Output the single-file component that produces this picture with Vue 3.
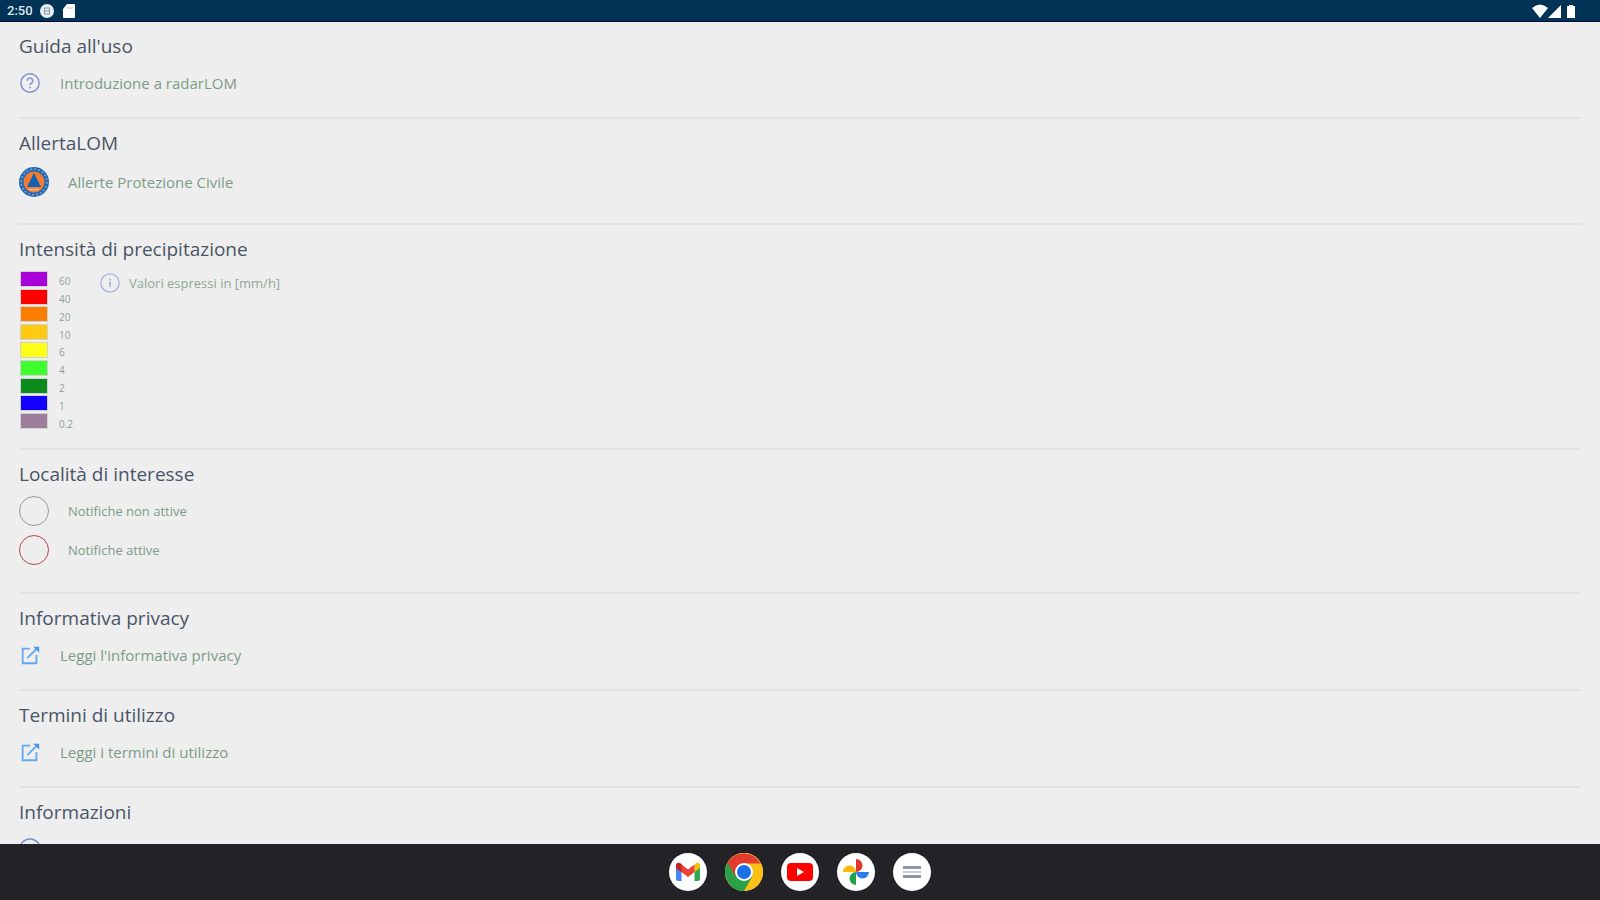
<script setup>
import { ref } from 'vue'

// legenda intensità di precipitazione (mm/h)
const legend = ref([
  { value: '60', cls: 'purple' },
  { value: '40', cls: 'red' },
  { value: '20', cls: 'orange' },
  { value: '10', cls: 'amber' },
  { value: '6', cls: 'yellow' },
  { value: '4', cls: 'lime' },
  { value: '2', cls: 'green' },
  { value: '1', cls: 'blue' },
  { value: '0.2', cls: 'mauve' },
])
// link esterni
const links = ref([
  { title: 'Informativa privacy', text: "Leggi l'informativa privacy" },
  { title: 'Termini di utilizzo', text: 'Leggi i termini di utilizzo' },
])
</script>

<template>
  <div class="screen">
    <header class="status">
      <span class="time">2:50</span>
      <svg class="s-icon" viewBox="0 0 14 14">
        <circle cx="7" cy="7" r="7" fill="#e8edf2" />
        <path d="M4.5 4h5M4.5 7h5M4.5 10h5M4.5 4v6M9.5 4v6" stroke="#8196a8" stroke-width="1" fill="none" />
      </svg>
      <svg class="s-icon sd" viewBox="0 0 14 14">
        <path d="M5 0h7a1 1 0 0 1 1 1v12a1 1 0 0 1-1 1H2a1 1 0 0 1-1-1V5z" fill="#fff" />
        <path d="M6 3v2M8 3v2M10 3v2" stroke="#b6c3cf" stroke-width="1" />
      </svg>
      <span class="space"></span>
      <svg class="sys" viewBox="0 0 46 14">
        <path d="M0 4Q8 -3 16 4L8 14z" fill="#fff" />
        <path d="M29 1v13H16z" fill="#fff" />
        <path d="M37 1h4v1h2v12h-8V2h2z" fill="#fff" />
      </svg>
    </header>

    <main class="content">
      <section>
        <h2>Guida all'uso</h2>
        <a class="row" href="#">
          <svg class="icon" viewBox="0 0 24 24" fill="none" stroke="#7f8fd6" stroke-width="1.6">
            <circle cx="12" cy="12" r="10" />
            <path d="M9 9.5a3 3 0 1 1 4.5 2.6c-1 .6-1.5 1.1-1.5 2.2M12 16v1.8" />
          </svg>
          <span>Introduzione a radarLOM</span>
        </a>
      </section>

      <section class="alert">
        <h2>AllertaLOM</h2>
        <a class="row big" href="#">
          <svg class="logo" viewBox="0 0 30 30">
            <circle cx="15" cy="15" r="15" fill="#2467b3" />
            <circle cx="15" cy="15" r="12.8" fill="none" stroke="#7fa6d2" stroke-width="1.5" stroke-dasharray="2 2" />
            <circle cx="15" cy="15" r="10.5" fill="#f47b32" />
            <path d="M15 6l7 14H8z" fill="#1263b5" />
            <path d="M10 22.5h10" stroke="#f5c09a" stroke-width="1.5" />
          </svg>
          <span>Allerte Protezione Civile</span>
        </a>
      </section>

      <section class="intensity">
        <h2>Intensità di precipitazione</h2>
        <div class="legend">
          <ul>
            <li v-for="item in legend" :key="item.value">
              <i class="swatch" :class="item.cls"></i>
              <span>{{ item.value }}</span>
            </li>
          </ul>
          <p class="note">
            <svg class="info" viewBox="0 0 24 24" fill="none" stroke="#a9b2e2" stroke-width="1.6">
              <circle cx="12" cy="12" r="11" />
              <path d="M12 7v2M12 10.5v6.5" stroke-width="2" />
            </svg>
            <span>Valori espressi in [mm/h]</span>
          </p>
        </div>
      </section>

      <section class="places">
        <h2>Località di interesse</h2>
        <div class="row"><i class="ring"></i><span>Notifiche non attive</span></div>
        <div class="row"><i class="ring active"></i><span>Notifiche attive</span></div>
      </section>

      <section v-for="link in links" :key="link.title">
        <h2>{{ link.title }}</h2>
        <a class="row" href="#">
          <svg class="icon" viewBox="0 0 24 24" fill="none" stroke="#62a9ee" stroke-width="2">
            <path d="M12 5H4v16h15v-9" />
            <path d="M9 15.5L20 4.5" />
            <path d="M15.5 3H22v6.5z" fill="#4a98ea" stroke="none" />
          </svg>
          <span>{{ link.text }}</span>
        </a>
      </section>

      <section>
        <h2>Informazioni</h2>
        <a class="row" href="#">
          <svg class="icon" viewBox="0 0 24 24" fill="none" stroke="#7f8fd6" stroke-width="1.6">
            <circle cx="12" cy="12" r="11" />
            <path d="M12 7v2M12 10.5v6.5" stroke-width="2" />
          </svg>
          <span>Crediti</span>
        </a>
      </section>
    </main>

    <nav class="dock">
      <button aria-label="Gmail">
        <svg viewBox="0 0 38 38">
          <path d="M7 12.5v13.5a2 2 0 0 0 2 2h3.5V16z" fill="#4285f4" />
          <path d="M31 12.5v13.5a2 2 0 0 1-2 2h-3.5V16z" fill="#34a853" />
          <path d="M25.5 12v7L31 15v-2.5c0-2.5-2.5-3.5-4.5-2z" fill="#fbbc04" />
          <path d="M7 15l12 9 6.5-5v-7.5L19 16.5l-7.5-6C9.5 9 7 10 7 12.5z" fill="#ea4335" />
          <path d="M7 12.5V15l5.5 4v-7.5l-1-1C9.5 9 7 10 7 12.5z" fill="#c5221f" />
        </svg>
      </button>
      <button aria-label="Chrome">
        <svg viewBox="0 0 38 38">
          <circle cx="19" cy="19" r="19" fill="#fbc116" />
          <path d="M19 19L2.5 9.5A19 19 0 0 0 19 38l8-14z" fill="#2c9f47" />
          <path d="M19 19L11 24 2.5 9.5A19 19 0 0 1 35.5 10.5H19z" fill="#e33b2e" />
          <circle cx="19" cy="19" r="9" fill="#fff" />
          <circle cx="19" cy="19" r="7" fill="#1a6fe8" />
        </svg>
      </button>
      <button aria-label="YouTube">
        <svg viewBox="0 0 38 38">
          <rect x="6" y="10" width="26" height="18" rx="4" fill="#f00" />
          <path d="M16 15l7 4-7 4z" fill="#fff" />
        </svg>
      </button>
      <button aria-label="Foto">
        <svg viewBox="0 0 38 38">
          <path d="M19 19V6a6.5 6.5 0 0 1 0 13z" fill="#e5352b" />
          <path d="M19 19h13a6.5 6.5 0 0 1-13 0z" fill="#2a7cf0" />
          <path d="M19 19v13a6.5 6.5 0 0 1 0-13z" fill="#23a348" />
          <path d="M19 19H6a6.5 6.5 0 0 1 13 0z" fill="#fbb704" />
        </svg>
      </button>
      <button aria-label="App">
        <svg viewBox="0 0 38 38">
          <path d="M10 14.5h18" stroke="#8d99b8" stroke-width="3" />
          <path d="M10 19h18" stroke="#c3cbe0" stroke-width="2" />
          <path d="M10 23.5h18" stroke="#8e93a3" stroke-width="3" />
        </svg>
      </button>
    </nav>
  </div>
</template>

<style>
body {
  margin: 0;
  background: #eee;
}
</style>

<style scoped>
.screen {
  height: 100vh;
  display: flex;
  flex-direction: column;
  background: #eee;
  font-family: "Open Sans", "Noto Sans", sans-serif;
}
.status {
  box-sizing: border-box;
  height: 22px;
  flex: none;
  display: flex;
  align-items: center;
  padding: 1px 22px 0 7px;
  background: #003355;
  border-bottom: 1px solid #00093a;
}
.time {
  width: 33px;
  color: #dfe6ec;
  font: 500 13px/20px Roboto, sans-serif;
}
.s-icon {
  width: 14px;
  height: 14px;
}
.sd {
  margin-left: 8px;
}
.space {
  flex: 1;
}
.sys {
  width: 46px;
  height: 14px;
}
.content {
  flex: 1;
  min-height: 0;
  overflow: hidden;
  padding: 0 19px;
}
section {
  padding: 10px 0 11px;
  border-bottom: 2px solid #e2e2e2;
}
h2 {
  margin: 0;
  color: #4a5568;
  font-size: 19px;
  font-weight: 400;
  line-height: 28px;
}
.row {
  display: flex;
  align-items: center;
  gap: 19px;
  height: 46px;
  color: #7d9c86;
  font-size: 15px;
  text-decoration: none;
}
.icon {
  width: 22px;
  height: 22px;
}
.big {
  height: 50px;
}
.logo {
  width: 30px;
  height: 30px;
}
.alert {
  padding-bottom: 16px;
}
.intensity {
  padding-bottom: 18px;
}
.legend {
  display: flex;
  gap: 20px;
  margin-top: 7px;
}
ul {
  display: grid;
  grid-template-rows: repeat(9, 1fr);
  box-sizing: border-box;
  width: 61px;
  height: 160px;
  margin: 0;
  padding: 0 0 0 1px;
  list-style: none;
}
li {
  display: flex;
  align-items: center;
  gap: 11px;
  color: #8fa295;
  font-size: 10px;
  line-height: 12px;
}
li span {
  padding-top: 5px;
}
.swatch {
  width: 26px;
  height: 14px;
  border: 1px solid #cfd3cf;
}
.purple { background: #a800d8; }
.red { background: #ff0000; }
.orange { background: #fb7d00; }
.amber { background: #ffc811; }
.yellow { background: #ffff18; }
.lime { background: #3cff2d; }
.green { background: #0c8a1b; }
.blue { background: #1400ff; }
.mauve { background: #9c7d9b; }
.note {
  display: flex;
  align-items: center;
  gap: 9px;
  height: 26px;
  margin: 0;
  color: #8fa896;
  font-size: 13px;
}
.info {
  width: 20px;
  height: 20px;
}
.places {
  padding-bottom: 23px;
}
.places h2 {
  margin-bottom: 3px;
}
.places .row {
  height: 39px;
  font-size: 13px;
}
.ring {
  box-sizing: border-box;
  width: 30px;
  height: 30px;
  border: 1px solid #999;
  border-radius: 50%;
}
.active {
  border-color: #b5454f;
}
.dock {
  flex: none;
  height: 56px;
  display: flex;
  justify-content: center;
  align-items: center;
  gap: 18px;
  background: #232327;
}
.dock button {
  width: 38px;
  height: 38px;
  padding: 0;
  border: 0;
  border-radius: 50%;
  background: #fff;
}
.dock svg {
  display: block;
  width: 38px;
  height: 38px;
}
</style>
